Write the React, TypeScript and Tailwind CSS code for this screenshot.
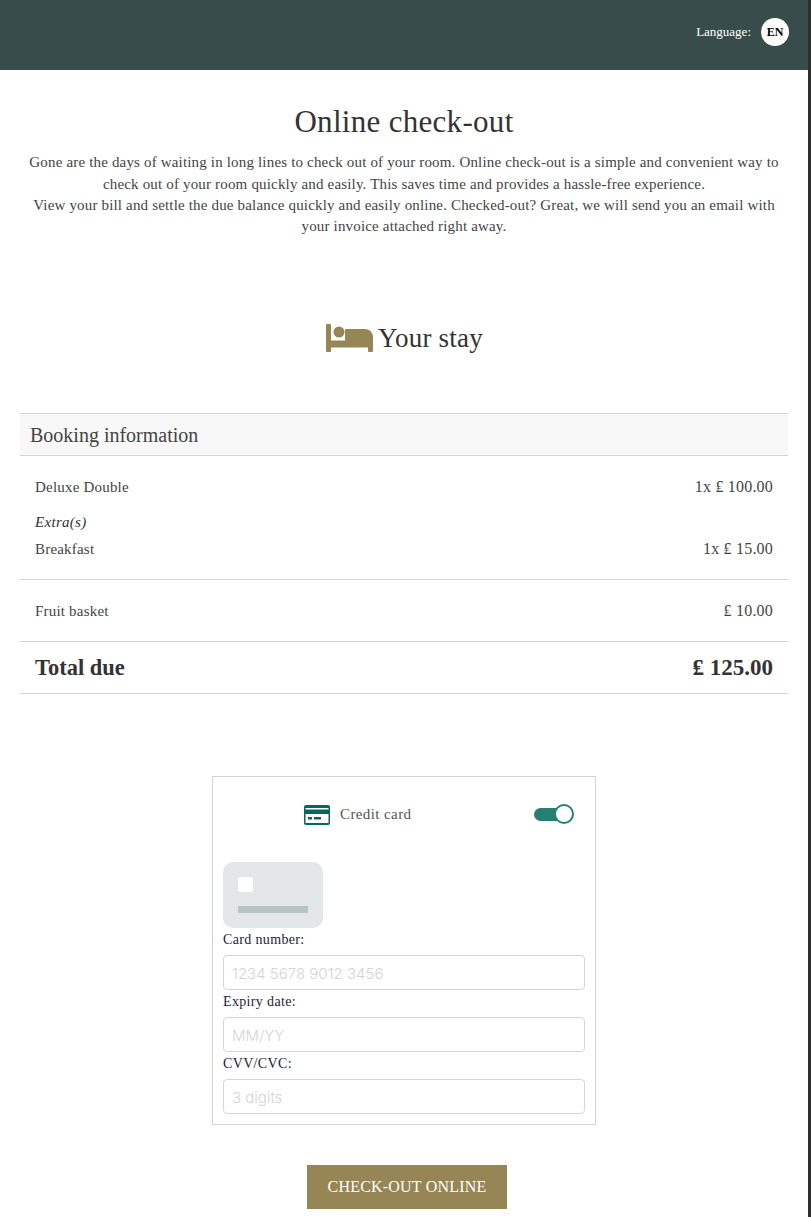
const serif = { fontFamily: '"Liberation Serif", "DejaVu Serif", serif' }

function BedIcon() {
  return (
    <svg width="47" height="28" viewBox="0 0 47 28" fill="#968656">
      <path d="M1 0h3a1 1 0 0 1 1 1v15.500h14V6a1 1 0 0 1 1-1h19a8 8 0 0 1 8 8v14a1 1 0 0 1-1 1h-3a1 1 0 0 1-1-1v-3.500H5V27a1 1 0 0 1-1 1H1a1 1 0 0 1-1-1V1a1 1 0 0 1 1-1z" />
      <circle cx="13" cy="8" r="5.500" />
    </svg>
  )
}

function CardIcon() {
  return (
    <svg width="26" height="20" viewBox="0 0 26 20">
      <rect width="26" height="20" rx="2" fill="#07675f" />
      <rect x="1.500" y="3" width="23" height="1.500" fill="#fff" />
      <rect x="1.500" y="9" width="23" height="9" fill="#fff" />
      <rect x="4" y="12" width="4" height="2.500" fill="#07675f" />
      <rect x="10" y="12" width="7" height="2.500" fill="#07675f" />
    </svg>
  )
}

function Row({ label, value }: { label: string; value: string }) {
  return (
    <div className="flex items-center justify-between text-[15px] leading-[22px] tracking-[0.2px] text-[#444]">
      <span>{label}</span>
      <span className="text-[16px]">{value}</span>
    </div>
  )
}

function Field({ label, placeholder }: { label: string; placeholder: string }) {
  return (
    <div>
      <div className="h-[27px] pt-[2px] text-[14px] leading-[20px] tracking-[0.35px] text-[#1b2438]">{label}</div>
      <div className="flex h-[35px] items-center rounded-[4px] border border-[#d6d6d6] px-[8px] pt-[3px] font-['Inter'] text-[15px] font-light text-[#d4d4d4]">
        {placeholder}
      </div>
    </div>
  )
}

export default function App() {
  return (
    <div className="flex h-[1217px] overflow-hidden bg-white" style={serif}>
      <div className="w-[808px]">
        <header className="flex h-[70px] items-center justify-end gap-[10px] bg-[#384d4b] pr-[19px] pb-[6px] text-white">
          <span className="text-[13px]">Language:</span>
          <span className="flex h-[28px] w-[28px] items-center justify-center rounded-full bg-white text-[12px] font-bold text-black">EN</span>
        </header>

        <section className="px-[20px] pt-[33px] text-center">
          <h1 className="text-[31px] leading-[38px] tracking-[0.3px] text-[#333]">Online check-out</h1>
          <p className="mt-[10px] text-[15px] leading-[22px] tracking-[0.17px] text-[#444]">
            Gone are the days of waiting in long lines to check out of your room. Online check-out is a simple and convenient way to
            check out of your room quickly and easily. This saves time and provides a hassle-free experience.
          </p>
          <p className="text-[15px] leading-[21px] tracking-[0.17px] text-[#444]">
            View your bill and settle the due balance quickly and easily online. Checked-out? Great, we will send you an email with
            your invoice attached right away.
          </p>
          <div className="mt-[83px] flex h-[36px] items-center justify-center gap-[5px] pl-[1px]">
            <BedIcon />
            <h2 className="text-[27px] leading-[36px] tracking-[0.2px] text-[#333]">Your stay</h2>
          </div>
        </section>

        <section className="mx-[20px] mt-[57px]">
          <div className="flex h-[43px] items-center border-y border-[#d4d4d4] bg-[#f8f8f8] px-[10px] text-[20px] text-[#444]">
            Booking information
          </div>
          <div className="border-b border-[#d4d4d4] px-[15px] pt-[20px] pb-[19px]">
            <Row label="Deluxe Double" value="1x ₤ 100.00" />
            <div className="mt-[14px] text-[15px] leading-[20px] tracking-[0.3px] text-[#333] italic">Extra(s)</div>
            <div className="mt-[6px]">
              <Row label="Breakfast" value="1x ₤ 15.00" />
            </div>
          </div>
          <div className="border-b border-[#d4d4d4] px-[15px] pt-[20px] pb-[19px]">
            <Row label="Fruit basket" value="₤ 10.00" />
          </div>
          <div className="flex h-[52px] items-center justify-between border-b border-[#d4d4d4] px-[15px] pt-[1px] text-[22.500px] font-bold text-[#333]">
            <span>Total due</span>
            <span className="text-[23px]">₤ 125.00</span>
          </div>
        </section>

        <section className="mx-auto mt-[82px] h-[349px] w-[384px] border border-[#d4d4d4] px-[10px] pt-[27px]">
          <div className="flex h-[21px] items-center pr-[25px] pl-[81px]">
            <CardIcon />
            <span className="ml-[10px] text-[15px] tracking-[0.4px] text-[#555]">Credit card</span>
            <div className="relative ml-auto h-[13px] w-[26px] rounded-l-full bg-[#268072]">
              <span className="absolute top-[-4px] left-[20px] h-[20px] w-[20px] rounded-full border-2 border-[#268072] bg-white" />
            </div>
          </div>
          <div className="mt-[37px] h-[66px] w-[100px] rounded-[10px] bg-[#e3e7ea] px-[15px] pt-[15px]">
            <div className="h-[15px] w-[15px] rounded-[3px] bg-white" />
            <div className="mt-[14px] h-[7px] w-[70px] bg-[#b8c3c6]" />
          </div>
          <Field label="Card number:" placeholder="1234 5678 9012 3456" />
          <Field label="Expiry date:" placeholder="MM/YY" />
          <Field label="CVV/CVC:" placeholder="3 digits" />
        </section>

        <div className="mt-[40px] flex justify-center pl-[6px]">
          <button className="h-[44px] w-[200px] bg-[#968656] text-[16px] tracking-[0.2px] text-white">CHECK-OUT ONLINE</button>
        </div>
      </div>
      <div className="w-[3px] bg-[#2e2e2e]" />
    </div>
  )
}
